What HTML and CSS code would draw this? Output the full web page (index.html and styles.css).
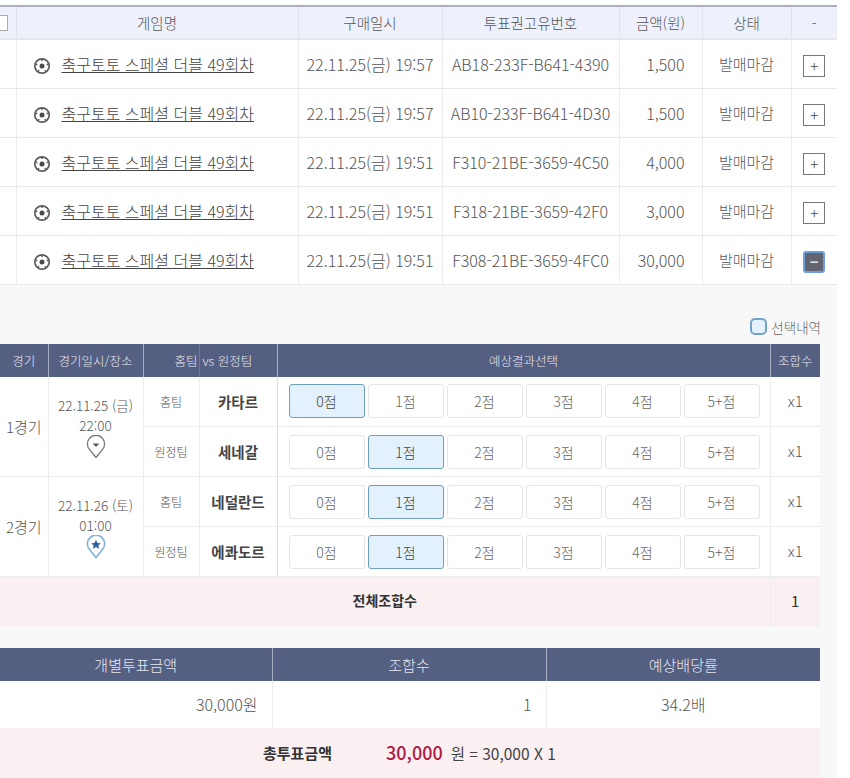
FILE: index.html
```html
<!DOCTYPE html>
<html lang="ko">
<head>
<meta charset="utf-8">
<title>투표내역</title>
<link rel="stylesheet" href="styles.css">
</head>
<body>
<svg class="defs" width="0" height="0" aria-hidden="true">
  <symbol id="ball" viewBox="0 0 18 18">
    <circle cx="9" cy="9" r="7.2" fill="#fff" stroke="#5c5c5c" stroke-width="1.7"/>
    <circle cx="9" cy="9" r="2.5" fill="#4a4a4a"/>
    <path d="M9 1.8v2.2M2.3 7l2 .8M15.7 7l-2 .8M4.8 15l1.3-1.9M13.2 15l-1.3-1.9" stroke="#5c5c5c" stroke-width="1.5" fill="none"/>
  </symbol>
</svg>
<main class="page">
  <section class="top">
    <table class="list">
      <colgroup><col class="c-check"><col class="c-name"><col class="c-date"><col class="c-id"><col class="c-amt"><col class="c-state"><col class="c-more"></colgroup>
      <thead>
        <tr><th class="check-cell"><span class="checkbox"></span></th><th>게임명</th><th>구매일시</th><th>투표권고유번호</th><th>금액(원)</th><th>상태</th><th>-</th></tr>
      </thead>
      <tbody>
        <tr><td></td><td class="name"><svg class="ball"><use href="#ball"/></svg><a>축구토토 스페셜 더블 49회차</a></td><td>22.11.25(금) 19:57</td><td>AB18-233F-B641-4390</td><td class="amt">1,500</td><td class="state">발매마감</td><td><span class="toggle">+</span></td></tr>
        <tr><td></td><td class="name"><svg class="ball"><use href="#ball"/></svg><a>축구토토 스페셜 더블 49회차</a></td><td>22.11.25(금) 19:57</td><td>AB10-233F-B641-4D30</td><td class="amt">1,500</td><td class="state">발매마감</td><td><span class="toggle">+</span></td></tr>
        <tr><td></td><td class="name"><svg class="ball"><use href="#ball"/></svg><a>축구토토 스페셜 더블 49회차</a></td><td>22.11.25(금) 19:51</td><td>F310-21BE-3659-4C50</td><td class="amt">4,000</td><td class="state">발매마감</td><td><span class="toggle">+</span></td></tr>
        <tr><td></td><td class="name"><svg class="ball"><use href="#ball"/></svg><a>축구토토 스페셜 더블 49회차</a></td><td>22.11.25(금) 19:51</td><td>F318-21BE-3659-42F0</td><td class="amt">3,000</td><td class="state">발매마감</td><td><span class="toggle">+</span></td></tr>
        <tr><td></td><td class="name"><svg class="ball"><use href="#ball"/></svg><a>축구토토 스페셜 더블 49회차</a></td><td>22.11.25(금) 19:51</td><td>F308-21BE-3659-4FC0</td><td class="amt">30,000</td><td class="state">발매마감</td><td><span class="toggle open">−</span></td></tr>
      </tbody>
    </table>
  </section>
  <section class="detail">
    <div class="legend"><span class="swatch"></span>선택내역</div>
    <table class="games">
      <colgroup><col class="g-round"><col class="g-date"><col class="g-side"><col class="g-team"><col class="g-pick"><col class="g-combo"></colgroup>
      <thead>
        <tr><th>경기</th><th>경기일시/장소</th><th class="th-home">홈팀</th><th class="th-away">vs 원정팀</th><th>예상결과선택</th><th>조합수</th></tr>
      </thead>
      <tbody>
        <tr>
          <td rowspan="2" class="round">1경기</td>
          <td rowspan="2" class="when">22.11.25 (금)<br>22:00
            <svg class="pin" viewBox="0 0 20 24"><path d="M10 22.5 3.6 14.6A8.6 8.6 0 1 1 16.4 14.6Z" fill="#fff" stroke="#777" stroke-width="1.3" stroke-linejoin="round"/><path d="M6.8 8.6h6.4L10 12Z" fill="#555"/></svg>
          </td>
          <td class="side">홈팀</td><td class="team">카타르</td>
          <td class="picks"><div class="pick-row"><span class="pick on">0점</span><span class="pick">1점</span><span class="pick">2점</span><span class="pick">3점</span><span class="pick">4점</span><span class="pick">5+점</span></div></td>
          <td class="combo">x1</td>
        </tr>
        <tr>
          <td class="side">원정팀</td><td class="team">세네갈</td>
          <td class="picks"><div class="pick-row"><span class="pick">0점</span><span class="pick on">1점</span><span class="pick">2점</span><span class="pick">3점</span><span class="pick">4점</span><span class="pick">5+점</span></div></td>
          <td class="combo">x1</td>
        </tr>
        <tr>
          <td rowspan="2" class="round">2경기</td>
          <td rowspan="2" class="when">22.11.26 (토)<br>01:00
            <svg class="pin" viewBox="0 0 20 24"><path d="M10 22.5 3.6 14.6A8.6 8.6 0 1 1 16.4 14.6Z" fill="#fff" stroke="#7fb2d8" stroke-width="1.6" stroke-linejoin="round"/><path d="m10 4.8 1.5 3.1 3.3.4-2.5 2.2.8 3.3L10 12.1l-3.1 1.7.8-3.3-2.5-2.2 3.3-.4Z" fill="#2f5f9e"/></svg>
          </td>
          <td class="side">홈팀</td><td class="team">네덜란드</td>
          <td class="picks"><div class="pick-row"><span class="pick">0점</span><span class="pick on">1점</span><span class="pick">2점</span><span class="pick">3점</span><span class="pick">4점</span><span class="pick">5+점</span></div></td>
          <td class="combo">x1</td>
        </tr>
        <tr>
          <td class="side">원정팀</td><td class="team">에콰도르</td>
          <td class="picks"><div class="pick-row"><span class="pick">0점</span><span class="pick on">1점</span><span class="pick">2점</span><span class="pick">3점</span><span class="pick">4점</span><span class="pick">5+점</span></div></td>
          <td class="combo">x1</td>
        </tr>
        <tr class="sum">
          <td colspan="5" class="sum-label">전체조합수</td><td class="sum-val">1</td>
        </tr>
      </tbody>
    </table>
    <table class="totals">
      <colgroup><col class="t-col1"><col class="t-col2"><col class="t-col3"></colgroup>
      <thead><tr><th>개별투표금액</th><th>조합수</th><th>예상배당률</th></tr></thead>
      <tbody>
        <tr><td class="right">30,000원</td><td class="right">1</td><td>34.2배</td></tr>
        <tr class="grand"><td colspan="3"><div class="grand-line"><b class="grand-label">총투표금액</b><span class="grand-val"><strong>30,000</strong>원 = 30,000 X 1</span></div></td></tr>
      </tbody>
    </table>
  </section>
</main>
</body>
</html>
```
FILE: styles.css
```css
* { box-sizing: border-box; }
html, body { margin: 0; padding: 0; background: #fff; height: 778px; overflow: hidden; }
body { font-family: "Noto Sans CJK KR", "Noto Sans", sans-serif; color: #555; font-size: 15px; font-weight: 300; }
.defs { display: block; height: 0; }
.page { width: 837px; }
table { border-collapse: collapse; table-layout: fixed; }
th, td { padding: 0; text-align: center; font-weight: 300; }

.top { padding-top: 5px; background: #fff; }
.list { width: 837px; border-top: 2px solid #a9b0c6; }
.c-check { width: 16px; } .c-name { width: 282px; } .c-date { width: 144px; } .c-id { width: 177px; }
.c-amt { width: 83px; } .c-state { width: 89px; } .c-more { width: 46px; }
.list th { height: 33px; background: #eef1fb; color: #555; font-size: 14.5px; border-left: 1px solid #e0e3ec; border-bottom: 2px solid #e4e6ec; }
.list th:first-child, .list td:first-child { border-left: 0; }
.check-cell { overflow: hidden; text-align: left; }
.checkbox { display: block; width: 16px; height: 16px; margin-left: -8px; background: #fff; border: 1px solid #aaa; }
.list td { height: 49px; font-size: 16px; border-left: 1px solid #ebebeb; border-bottom: 1px solid #e8e8e8; white-space: nowrap; }
.list td.state { font-size: 15px; }
.list td.name { text-align: left; padding-left: 16px; }
.ball { width: 18px; height: 18px; vertical-align: -4px; margin-right: 11px; }
.name a { text-decoration: underline; color: #444; }
.amt { text-align: right !important; padding-right: 17px !important; }
.toggle { display: inline-block; width: 22px; height: 22px; margin-top: 2px; line-height: 19px; border: 1px solid #777; color: #444; font-size: 15px; vertical-align: middle; }
.toggle.open { background: #62656f; color: #ddd; border: 2px solid #6d9fdc; border-radius: 3px; line-height: 17px; font-weight: 700; }

.detail { background: #f8f8f8; height: 493px; padding-right: 17px; overflow: hidden; }
.legend { display: flex; justify-content: flex-end; align-items: center; height: 59px; padding-top: 25px; font-size: 13.5px; color: #666; margin-right: -1px; }
.swatch { width: 17px; height: 17px; margin-right: 4px; border-radius: 5px; background: #e4f2fc; border: 2px solid #6fa3cc; }

.games { width: 820px; background: #fff; }
.g-round { width: 48px; } .g-date { width: 95px; } .g-side { width: 56px; } .g-team { width: 78px; } .g-pick { width: 493px; } .g-combo { width: 50px; }
.games th { height: 33px; background: #555f82; color: #e6e8ef; font-size: 12.5px; border-left: 1px solid #aab0c4; }
.totals th { height: 33px; background: #555f82; color: #e6e8ef; font-size: 15px; border-left: 1px solid #aab0c4; }
.games th:first-child, .totals th:first-child { border-left: 0; }
.games th.th-home { text-align: right; padding-right: 1px; }
.games th.th-away { text-align: left; padding-left: 3px; border-left-color: #6d7696; }
.games td { height: 50px; border-left: 1px solid #ececec; border-bottom: 1px solid #ececec; font-size: 14px; }
.games td.round { border-left: 0; text-align: center; font-size: 15px; }
.games td.when { font-size: 13.5px; line-height: 20px; vertical-align: top; padding-top: 18px; }
.pin { display: block; width: 20px; height: 24px; margin: 0 auto; }
.games td.side { font-size: 12px; }
.games td.team { font-weight: 700; color: #444; font-size: 14.5px; }
.games td.combo { font-size: 15px; padding-bottom: 2px; }
.games td.picks { border-left: 1px solid #ddd; padding: 0 10px 0 11px; }
.pick-row { display: flex; gap: 3px; }
.pick { flex: 1; height: 34px; line-height: 32px; background: #fff; border: 1px solid #e6e6e6; border-radius: 3px; font-size: 14px; color: #666; }
.pick.on { background: #e2f1fb; border: 1px solid #6e9fbd; color: #444; }
.sum td { height: 49px; background: #fbf0f1; border-bottom: 1px solid #eee; }
.games td.sum-label { border-left: 0; font-weight: 700; color: #333; font-size: 14px; padding-bottom: 2px; }
.games td.sum-val { font-size: 15px; color: #333; font-weight: 400; padding-bottom: 2px; }

.totals { width: 820px; margin-top: 22px; background: #fff; }
.t-col1 { width: 272px; } .t-col2 { width: 274px; } .t-col3 { width: 274px; }
.totals td { height: 47px; font-size: 16px; border-left: 1px solid #ececec; padding-bottom: 2px; }
.totals td:first-child { border-left: 0; }
.totals td.right { text-align: right; padding-right: 14px; }
.grand td { height: 50px; background: #fbf0f1; }
.grand-line { display: flex; justify-content: flex-start; align-items: center; padding-left: 263px; }
.grand-label { width: 123px; text-align: left; font-size: 15px; font-weight: 700; color: #333; }
.grand-val { font-size: 15.5px; color: #444; font-weight: 400; }
.grand-val strong { font-size: 18px; color: #b0193f; font-weight: 500; margin-right: 8px; }
```
